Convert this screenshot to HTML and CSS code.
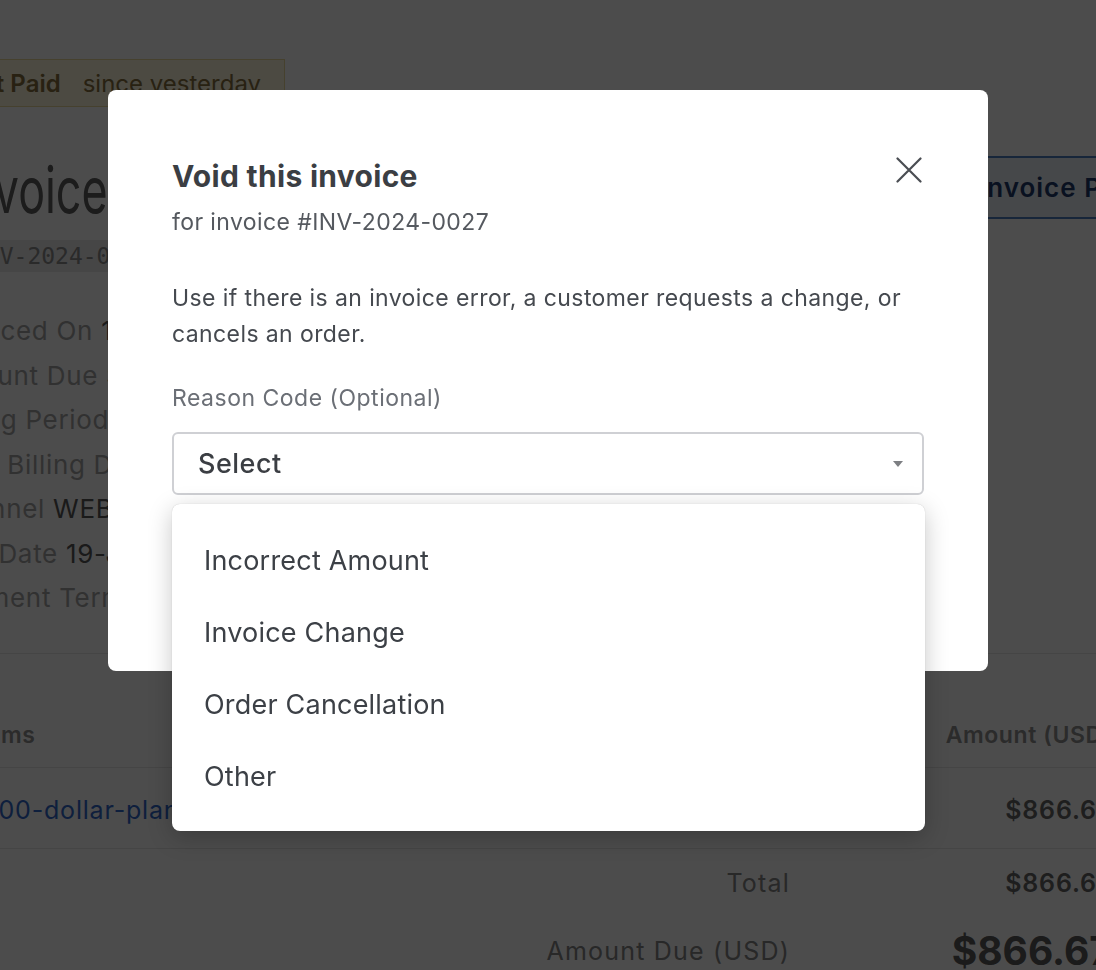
FILE: index.html
```html
<!DOCTYPE html>
<html lang="en">
<head>
<meta charset="utf-8">
<title>Void invoice</title>
<link rel="stylesheet" href="styles.css">
</head>
<body>
<div class="page">
  <div class="banner"><span class="status">Not Paid</span><span class="since">since yesterday</span></div>
  <div class="header">
    <div class="title-block">
      <h1 class="inv-title">Invoice</h1>
      <code class="inv-code">INV-2024-0027</code>
    </div>
    <button class="pdf-btn">Download Invoice PDF</button>
  </div>
  <div class="fields">
    <div class="field"><span class="label">Invoiced On</span> <span class="value">19-Jan-2024</span></div>
    <div class="field"><span class="label">Amount Due</span> <span class="value">$866.67</span></div>
    <div class="field"><span class="label">Billing Period</span> <span class="value">19-Jan-2024 – 18-Feb-2024</span></div>
    <div class="field"><span class="label">Next Billing Date</span> <span class="value">19-Feb-2024</span></div>
    <div class="field"><span class="label">Channel</span> <span class="value">WEB</span></div>
    <div class="field"><span class="label">Due Date</span> <span class="value">19-Jan-2024</span></div>
    <div class="field"><span class="label">Payment Terms</span> <span class="value">Due on receipt</span></div>
  </div>
  <div class="items">
    <div class="items-head">
      <span class="col-item">Items</span>
      <span class="col-amount">Amount (USD)</span>
    </div>
    <div class="items-row">
      <a class="col-item item-link">1000-dollar-plan (Monthly)</a>
      <span class="col-amount amount">$866.67</span>
    </div>
    <div class="totals">
      <span class="t-label">Total</span>
      <span class="t-value">$866.67</span>
      <span class="t-label">Amount Due (USD)</span>
      <span class="t-value big">$866.67</span>
    </div>
  </div>
</div>

<div class="overlay">
  <div class="modal" role="dialog">
    <div class="modal-head">
      <h2 class="modal-title">Void this invoice</h2>
      <button class="close" aria-label="Close">
        <svg width="26" height="26" viewBox="0 0 26 26"><path d="M1.5 1.5 L24.5 24.5 M24.5 1.5 L1.5 24.5" stroke="#4a4d52" stroke-width="2.2" stroke-linecap="round" fill="none"/></svg>
      </button>
    </div>
    <p class="subtitle">for invoice #INV-2024-0027</p>
    <p class="desc">Use if there is an invoice error, a customer requests a change, or cancels an order.</p>
    <label class="field-label">Reason Code (Optional)</label>
    <div class="select-wrap">
      <div class="select"><span>Select</span><span class="caret"></span></div>
      <ul class="menu">
        <li>Incorrect Amount</li>
        <li>Invoice Change</li>
        <li>Order Cancellation</li>
        <li>Other</li>
      </ul>
    </div>
    <div class="modal-foot">
      <button class="btn-cancel">Cancel</button>
      <button class="btn-void">Void Invoice</button>
    </div>
  </div>
</div>
</body>
</html>
```
FILE: styles.css
```css
* { box-sizing: border-box; }
html, body { margin: 0; padding: 0; }
body {
  width: 1096px;
  height: 970px;
  overflow: hidden;
  position: relative;
  background: #ffffff;
  font-family: Inter, "Noto Sans", sans-serif;
}

/* ---------- background invoice page ---------- */
.page {
  margin-left: -61px;
  width: 1173px;
  padding-top: 59px;
}
.banner {
  display: flex;
  align-items: center;
  gap: 22px;
  width: 346px;
  height: 48px;
  padding-left: 23px;
  background: #fdf7dc;
  border: 1px solid #eadb9c;
  font-size: 24px;
  color: #86703f;
}
.status { font-weight: 600; }

.header {
  display: flex;
  align-items: flex-start;
  margin-top: 45px;
  margin-right: -52px;
}
.title-block { flex: 1; }
.inv-title {
  margin: 0 0 0 17px;
  font-size: 64px;
  font-weight: 400;
  line-height: 76px;
  color: #5e5e5e;
  transform: scaleX(0.7);
  transform-origin: left center;
}
.inv-code {
  display: inline-block;
  margin: 12px 0 0 27px;
  padding: 0 6px;
  font-family: "DejaVu Sans Mono", monospace;
  font-size: 23px;
  line-height: 32px;
  background: #e9e9eb;
  color: #8c8c8c;
}
.pdf-btn {
  margin-top: 4px;
  height: 63px;
  padding: 0 24px;
  border: 2px solid #4d7fc4;
  border-radius: 6px;
  background: #eaf0f9;
  font-family: Inter, sans-serif;
  font-weight: 600;
  font-size: 26px;
  letter-spacing: 1px;
  color: #213a6b;
}

.fields {
  margin-top: 37px;
  font-size: 26px;
  line-height: 44.5px;
  letter-spacing: 0.7px;
}
.field .label { color: #a6a6a6; }
.field .value { color: #575757; }

.items {
  margin-top: 32px;
  border-top: 1px solid #e6e6e6;
  padding-top: 50px;
}
.items-head, .items-row {
  display: flex;
  justify-content: space-between;
  align-items: center;
  padding: 0 0 0 32px;
  border-bottom: 1px solid #e6e6e6;
}
.items-head {
  height: 64px;
  font-size: 23px;
  font-weight: 600;
  letter-spacing: 0.6px;
  color: #909090;
}
.items-row {
  height: 81px;
  padding-top: 5px;
  font-size: 25px;
  letter-spacing: 0.8px;
}
.item-link { color: #3168cc; }
.amount { font-weight: 600; color: #666666; }

.totals {
  display: grid;
  grid-template-columns: 851px 322px;
  grid-auto-rows: 68px;
  align-items: center;
  font-size: 25px;
  letter-spacing: 1.2px;
}
.t-label { text-align: right; color: #858585; }
.t-value { text-align: right; font-weight: 600; letter-spacing: 0.8px; color: #666666; }
.t-value.big { font-size: 39px; font-weight: 700; letter-spacing: 0; color: #5a5a5a; }

/* ---------- overlay & modal ---------- */
.overlay {
  position: fixed;
  inset: 0;
  background: rgba(0, 0, 0, 0.7);
  display: flex;
  justify-content: center;
  align-items: flex-start;
  padding-top: 90px;
}
.modal {
  width: 880px;
  height: 581px;
  background: #ffffff;
  border-radius: 8px;
  padding: 68px 64px 0;
}
.modal-head {
  display: flex;
  justify-content: space-between;
  align-items: flex-start;
}
.modal-title {
  margin: 0;
  font-size: 30px;
  line-height: 36px;
  font-weight: 700;
  letter-spacing: 0.3px;
  color: #3b3e43;
}
.close {
  border: 0;
  background: none;
  padding: 0;
  margin: -1px 2px 0 0;
  width: 26px;
  height: 26px;
  display: flex;
}
.subtitle {
  margin: 13px 0 0;
  font-size: 23px;
  line-height: 30px;
  letter-spacing: 0.4px;
  color: #55595f;
}
.desc {
  margin: 43px 0 0;
  font-size: 23px;
  line-height: 36px;
  letter-spacing: 0.4px;
  color: #45494f;
}
.field-label {
  display: block;
  margin-top: 31px;
  font-size: 23px;
  line-height: 30px;
  letter-spacing: 0.5px;
  color: #6b6f76;
}
.select-wrap {
  position: relative;
  margin-top: 19px;
}
.select {
  height: 63px;
  border: 2px solid #cfd0d4;
  border-radius: 6px;
  padding: 0 19px 0 24px;
  display: flex;
  align-items: center;
  justify-content: space-between;
  font-size: 27px;
  font-weight: 500;
  letter-spacing: 0.5px;
  color: #3b3e43;
}
.caret {
  width: 0;
  height: 0;
  border-left: 5px solid transparent;
  border-right: 5px solid transparent;
  border-top: 6px solid #7d7f83;
}
.menu {
  position: absolute;
  top: calc(100% + 9px);
  left: 0;
  right: -1px;
  margin: 0;
  padding: 20px 0 19px;
  list-style: none;
  background: #ffffff;
  border-radius: 8px;
  box-shadow: 0 0 1px rgba(0,0,0,0.25), 0 6px 24px rgba(0, 0, 0, 0.22);
  z-index: 2;
}
.menu li {
  height: 72px;
  display: flex;
  align-items: center;
  padding-left: 32px;
  font-size: 27px;
  letter-spacing: 0.2px;
  color: #3c4046;
}
.modal-foot {
  display: flex;
  justify-content: flex-end;
  gap: 16px;
  margin-top: 56px;
}
.btn-cancel, .btn-void {
  height: 52px;
  padding: 0 24px;
  border-radius: 6px;
  font-family: Inter, sans-serif;
  font-size: 20px;
  font-weight: 600;
}
.btn-cancel { background: #fff; border: 2px solid #cfd0d4; color: #3b3e43; }
.btn-void { background: #c0392b; border: 0; color: #fff; }
```
